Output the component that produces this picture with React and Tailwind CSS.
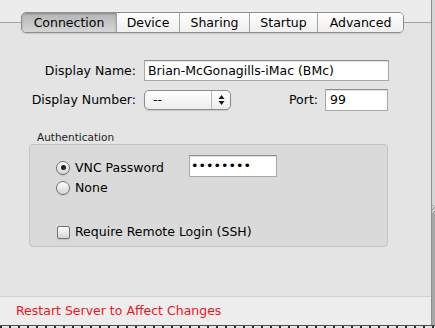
import React from "react";

function Tabs() {
  const tabs = [
    { label: "Connection", w: "w-[94px]", sel: true },
    { label: "Device", w: "w-[63px]" },
    { label: "Sharing", w: "w-[70px]" },
    { label: "Startup", w: "w-[68px]" },
    { label: "Advanced", w: "w-[86px]" },
  ];
  return (
    <div className="-mt-[11px] ml-[21px] flex h-[21px] w-fit rounded-[5px] border border-[#8e8e8e] overflow-hidden shadow-[0_1px_1px_rgba(0,0,0,0.12)]">
      {tabs.map((t, i) => (
        <div
          key={t.label}
          className={
            t.w +
            " h-full flex items-center justify-center leading-[19px] " +
            (i > 0 ? "border-l border-[#a2a2a2] " : "") +
            (t.sel
              ? "bg-gradient-to-b from-[#b4b4b4] to-[#d6d6d6] shadow-[inset_0_1px_2px_rgba(0,0,0,0.25)]"
              : "bg-gradient-to-b from-white to-[#efefef]")
          }
        >
          {t.label}
        </div>
      ))}
    </div>
  );
}

function Radio({ checked }) {
  return (
    <div className="w-[14px] h-[14px] rounded-full border border-[#727272] bg-gradient-to-b from-white to-[#d4d4d4] shadow-[0_1px_1px_rgba(0,0,0,0.1)] flex items-center justify-center shrink-0">
      {checked && <div className="w-[5px] h-[5px] rounded-full bg-[#1e1e1e]" />}
    </div>
  );
}

export default function App() {
  return (
    <div className="w-[435px] h-[328px] overflow-hidden flex flex-col font-['DejaVu_Sans',sans-serif] text-[12.5px] text-black">
      <div className="flex h-[325px]">
        <div className="w-[432px] flex flex-col bg-[#ececec] border-r border-[#8c8c8c]">
          <div className="h-[22px] shrink-0" />
          <div className="h-[275px] shrink-0 bg-[#e4e4e4] border-t border-[#a3a3a3] border-b border-b-[#d2d2d2] flex flex-col">
            <Tabs />

            <div className="mt-[27px] flex items-center h-[21px]">
              <div className="w-[136px] text-right leading-[16px]">Display Name:</div>
              <div className="ml-[8px] w-[245px] h-[21px] bg-white border border-[#a8a8a8] border-t-[#8c8c8c] pl-[3px] flex items-center leading-[16px] shadow-[inset_0_1px_1px_rgba(0,0,0,0.12)]">
                Brian-McGonagills-iMac (BMc)
              </div>
            </div>

            <div className="mt-[7px] flex items-center h-[23px]">
              <div className="w-[136px] text-right leading-[16px]">Display Number:</div>
              <div className="ml-[8px] w-[87px] h-[20px] rounded-[5px] border border-[#8b8b8b] bg-gradient-to-b from-white to-[#ececec] shadow-[0_1px_1px_rgba(0,0,0,0.12)] flex">
                <div className="flex-1 pl-[8px] flex items-center leading-[16px]">--</div>
                <div className="w-[19px] border-l border-[#b8b8b8] flex items-center justify-center">
                  <svg width="7" height="12" viewBox="0 0 7 12">
                    <path d="M3.5 1 L6.5 5 L0.5 5 Z" fill="#1a1a1a" />
                    <path d="M0.5 7 L6.5 7 L3.5 11 Z" fill="#1a1a1a" />
                  </svg>
                </div>
              </div>
              <div className="ml-[58px] leading-[16px]">Port:</div>
              <div className="ml-[7px] w-[63px] h-[22px] bg-white border border-[#a8a8a8] border-t-[#8c8c8c] pl-[4px] flex items-center leading-[16px] shadow-[inset_0_1px_1px_rgba(0,0,0,0.12)]">
                99
              </div>
            </div>

            <div className="mt-[20px] ml-[37px] h-[13px] text-[10.5px] leading-[13px] text-[#222]">
              Authentication
            </div>

            <div className="ml-[29px] w-[359px] h-[103px] shrink-0 bg-[#dadada] border border-[#c3c3c3] rounded-[4px] flex flex-col pt-[10px]">
              <div className="h-[22px] flex items-center pl-[26px]">
                <div className="flex items-center mt-[3px]">
                  <Radio checked />
                  <div className="ml-[5px] w-[114px] leading-[16px]">VNC Password</div>
                </div>
                <div className="w-[88px] h-[22px] bg-white border border-[#a8a8a8] border-t-[#8c8c8c] pl-[1px] flex items-center text-[12.7px] leading-[16px] shadow-[inset_0_1px_1px_rgba(0,0,0,0.12)]">
                  ••••••••
                </div>
              </div>
              <div className="mt-[1px] h-[20px] flex items-center pl-[26px]">
                <Radio />
                <div className="ml-[5px] leading-[16px]">None</div>
              </div>
              <div className="mt-[24px] h-[20px] flex items-center pl-[27px]">
                <div className="w-[13px] h-[13px] rounded-[2px] border border-[#727272] bg-gradient-to-b from-white to-[#d4d4d4] shadow-[0_1px_1px_rgba(0,0,0,0.1)] shrink-0" />
                <div className="ml-[5px] leading-[16px]">Require Remote Login (SSH)</div>
              </div>
            </div>
          </div>
          <div className="flex-1 bg-[#ededed] flex items-center pl-[16px]">
            <span className="text-[#f2141c] leading-[16px]">Restart Server to Affect Changes</span>
          </div>
        </div>
        <div className="w-[3px] flex flex-col">
          <div className="h-[205px] bg-[#d6d6d6]" />
          <div className="h-[8px] bg-[repeating-linear-gradient(135deg,#8a8a8a_0_1px,#d0d0d0_1px_3px)]" />
          <div className="flex-1 bg-[#a6a6a6]" />
        </div>
      </div>
      <div className="h-[1px] bg-[#4c4c4c]" />
      <div className="h-[2px] bg-[repeating-linear-gradient(90deg,#2a2a2a_0_2px,#e6e6e6_2px_9px)]" />
    </div>
  );
}
